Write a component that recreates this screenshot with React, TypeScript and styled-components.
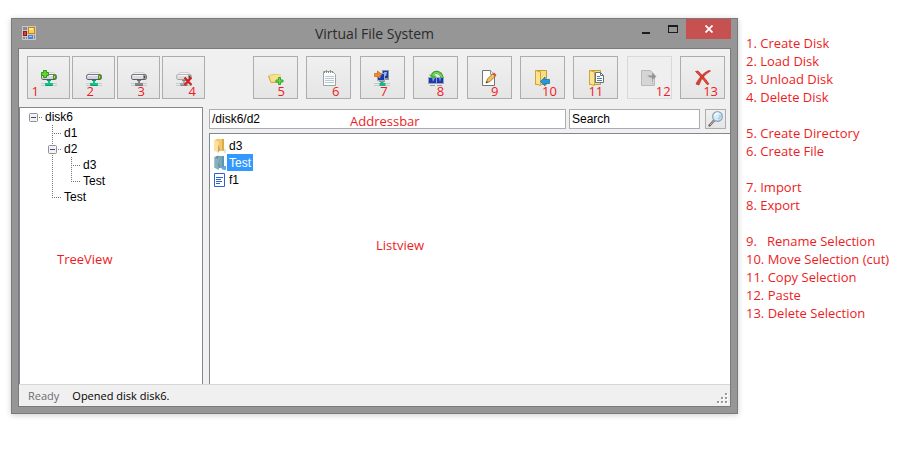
import React from "react";
import styled, { createGlobalStyle, css } from "styled-components";

const Global = createGlobalStyle`
  * { box-sizing: border-box; }
  body { margin: 0; background: #fff; }
  ul, ol { margin: 0; padding: 0; list-style: none; }
`;

const red = "#ed1c24";
const line = "#828790";
const uiFont = `"Liberation Sans", Arial, sans-serif`;
const segoe = `"Open Sans", "Noto Sans", sans-serif`;
const noteFont = `"Open Sans", "Noto Sans", sans-serif`;

const Page = styled.main`
  display: flex;
  align-items: flex-start;
  gap: 8px;
  padding: 18px 0 18px 11px;
`;

const Window = styled.section`
  flex: 1;
  min-width: 0;
  padding: 0 6px 6px;
  border: 1px solid #7a7a7a;
  background: #969696;
  box-shadow: 0 1px 6px rgba(0, 0, 0, 0.2);
`;

const TitleBar = styled.header`
  display: grid;
  grid-template-columns: 1fr auto 1fr;
  height: 29px;
`;

const AppIcon = styled.svg`
  width: 14px;
  height: 14px;
  margin: 7px 0 0 4px;
`;

const Title = styled.h1`
  margin: 0;
  font: 400 14px/30px ${segoe};
  color: #2b2b2b;
`;

const Controls = styled.div`
  display: flex;
  justify-content: flex-end;
  align-items: flex-start;
`;

const ControlButton = styled.button<{ $close?: boolean }>`
  display: flex;
  align-items: center;
  justify-content: center;
  width: ${(p) => (p.$close ? 45 : 27)}px;
  height: 20px;
  padding: 0;
  border: 0;
  background: ${(p) => (p.$close ? "#c75050" : "transparent")};
`;

const Client = styled.div`
  border: 1px solid #7a7a7a;
  background: #f0f0f0;
`;

const Toolbar = styled.div`
  display: flex;
  gap: 48px;
  padding: 7px 5px 8px 8px;
`;

const DiskGroup = styled.div`
  display: flex;
  gap: 2px;
`;

const FileGroup = styled.div`
  display: flex;
  flex: 1;
  justify-content: space-between;
`;

const ToolButton = styled.button<{ $wide?: boolean }>`
  position: relative;
  display: flex;
  align-items: center;
  justify-content: center;
  width: ${(p) => (p.$wide ? 45 : 43)}px;
  height: 43px;
  padding: 0;
  border: 1px solid #adadad;
  background: linear-gradient(#f0f0f0, #e5e5e5);
  &:disabled {
    border-color: #d9d9d9;
    background: #efefef;
  }
`;

const Icon = styled.svg`
  display: block;
  flex: none;
  width: 16px;
  height: 16px;
`;

const Tag = styled.span<{ $right: number }>`
  position: absolute;
  bottom: -2px;
  right: ${(p) => p.$right}px;
  font: 400 13px/18px ${noteFont};
  color: ${red};
`;

const Panes = styled.div`
  display: flex;
  gap: 6px;
  min-height: 277px;
`;

const noteBase = css`
  position: absolute;
  font: 400 13px/18px ${noteFont};
  color: ${red};
`;

const TreePane = styled.nav`
  position: relative;
  width: 184px;
  padding: 1px 0 0 4px;
  border: 1px solid ${line};
  border-bottom: 0;
  background: #fff;
`;

const TreeNote = styled.span`
  ${noteBase}
  left: 37px;
  top: 142px;
`;

const TreeRow = styled.li`
  display: flex;
  height: 16px;
  font: 400 12px/16px ${uiFont};
  color: #000;
`;

const Guide = styled.svg`
  display: block;
  flex: none;
  width: 19px;
  height: 16px;
`;

const NodeName = styled.span`
  padding-left: 2px;
`;

const Main = styled.div`
  display: flex;
  flex: 1;
  flex-direction: column;
  gap: 4px;
  min-width: 0;
  padding-top: 2px;
`;

const AddressRow = styled.div`
  display: flex;
  height: 20px;
  padding-right: 4px;
`;

const AddressField = styled.div`
  position: relative;
  display: flex;
  flex: 1;
  margin-right: 3px;
`;

const TextBox = styled.input`
  flex: 1;
  min-width: 0;
  height: 20px;
  padding: 0 2px 1px;
  border: 1px solid #abadb3;
  border-radius: 0;
  background: #fff;
  font: 400 12px/16px ${uiFont};
  color: #000;
`;

const SearchBox = styled(TextBox)`
  flex: none;
  width: 131px;
  margin-right: 5px;
`;

const SearchButton = styled.button`
  display: flex;
  align-items: center;
  justify-content: center;
  width: 21px;
  height: 20px;
  padding: 0;
  border: 1px solid #adadad;
  background: linear-gradient(#f0f0f0, #e5e5e5);
`;

const AddressNote = styled.span`
  ${noteBase}
  left: 141px;
  top: 3px;
`;

const ListPane = styled.div`
  position: relative;
  flex: 1;
  padding: 3px 0 0 4px;
  border: solid ${line};
  border-width: 1px 0 0 1px;
  background: #fff;
`;

const ListNote = styled.span`
  ${noteBase}
  left: 166px;
  top: 102px;
`;

const FileRow = styled.li`
  display: flex;
  align-items: center;
  height: 17px;
  font: 400 12px/16px ${uiFont};
  color: #000;
`;

const FileName = styled.span<{ $selected?: boolean }>`
  margin-left: -3px;
  padding: 1px 2px 0;
  background: ${(p) => (p.$selected ? "#3399ff" : "transparent")};
  color: ${(p) => (p.$selected ? "#fff" : "#000")};
`;

const StatusBar = styled.footer`
  display: flex;
  gap: 13px;
  height: 22px;
  padding: 0 2px 0 9px;
  border-top: 1px solid #d7d7d7;
  font: 400 11px/22px ${segoe};
  color: #000;
`;

const Ready = styled.span`
  color: #6d6d6d;
`;

const Grip = styled.svg`
  width: 11px;
  height: 11px;
  margin: 8px 0 0 auto;
`;

const Legend = styled.aside`
  display: flex;
  flex: none;
  flex-direction: column;
  gap: 18px;
  width: 168px;
  padding-top: 16px;
  font: 400 13px/18px ${noteFont};
  color: ${red};
`;

const LegendItem = styled.li`
  white-space: pre;
`;

type DriveMode = "add" | "load" | "unload" | "delete";

function DriveIcon({ mode }: { mode: DriveMode }) {
  const on = mode === "add" || mode === "load";
  const faded = mode === "delete";
  const foot = on ? "#10c489" : faded ? "#a8a8a8" : "#858585";
  const edge = faded ? "#b5b5b9" : "#77777d";
  return (
    <Icon viewBox="0 0 16 16" aria-hidden="true">
      <path d="M0 13.500h16M0 15.500h16" stroke="#c2cdd2" />
      <path d="M6 10h4v1H9v2h3v3H4v-3h3v-2H6z" fill={foot} />
      <path d="M6 10.500h4M5 15.500h6" stroke={on ? "#087b5b" : "#666"} opacity=".55" />
      <path d="M3.500 2.500h9l2 3h-13z" fill="#f1f1f1" stroke="#cfcfcf" />
      <rect x=".5" y="4.500" width="15" height="5" rx="1.500" fill={on ? "#d2d2e2" : "#dcdcdc"} stroke={edge} />
      <path d="M2 5.500h10" stroke="#f6f6fa" />
      <path d="M2 9.500h12" stroke={faded ? "#a0a0a0" : "#5b5b62"} />
      <rect x="12" y="5" width="3" height="4" fill={on ? "#419c19" : "#9b9b9b"} />
      <rect x="13" y="6" width="1" height="2" fill={on ? "#a7ee3b" : "#444"} />
      {mode === "add" && (
        <path d="M2.500.5h3v2h2v3h-2v2h-3v-2h-2v-3h2z" fill="#64d435" stroke="#269b13" />
      )}
      {mode === "delete" && (
        <path d="M8.500 7.500l7 7.500M15.500 7.500l-7 7.500" stroke="#d91e1e" strokeWidth="2.200" />
      )}
    </Icon>
  );
}

function NewFolderIcon() {
  return (
    <Icon viewBox="0 0 16 16" aria-hidden="true">
      <path d="M0 6l2-1.500L5 4h7.500v6.500l-2 2.500H3z" fill="#e6ca6c" />
      <path d="M2 5.500l10-1v5.500l-9 2z" fill="#f5e190" />
      <path d="M.5 6L3 12.500h7" stroke="#d2ae50" fill="none" />
      <path d="M10.500 7.500h2v2.500h2.500v2h-2.500v2.500h-2v-2.500h-2.500v-2h2.500z" fill="#68dc3c" stroke="#35a43a" />
    </Icon>
  );
}

function NotepadIcon() {
  return (
    <Icon viewBox="0 0 16 16" aria-hidden="true">
      <path d="M2.500 1.500h9l3 3v11h-12z" fill="#fdfdfd" stroke="#9ca3a3" />
      <path d="M4 6.500h9M4 8.500h9M4 10.500h9M4 12.500h9" stroke="#b5cbd7" />
      <path d="M3.500 1v2M5.500 0v3M7.500 1v2M9.500 0v3M11.500 1v2" stroke="#8b908f" />
    </Icon>
  );
}

function ImportIcon() {
  return (
    <Icon viewBox="0 0 16 16" aria-hidden="true">
      <path d="M0 13.500h16M0 15.500h16" stroke="#bdcbd0" />
      <path d="M6.500 12h3v1h2v3h-6v-3h1z" fill="#12b886" />
      <rect x="8.500" y=".5" width="6" height="8" fill="#1838ae" stroke="#8f959e" />
      <rect x="3.500" y="3.500" width="7" height="7" fill="#1838ae" stroke="#a9adb2" />
      <path d="M10 2h3l-1 4h-1zM5 5h2l-1 3H5z" fill="#92b3ff" />
      <path d="M5 11.500h6M11 9.500h4" stroke="#8d9298" />
      <path d="M.5 3.500h3V1L8 4.500 3.500 8V6.500h-3z" fill="#f18a29" stroke="#b86c25" strokeWidth=".7" />
    </Icon>
  );
}

function ExportIcon() {
  return (
    <Icon viewBox="0 0 16 16" aria-hidden="true">
      <rect x=".5" y="7.500" width="8" height="6" fill="#1b37b3" stroke="#9fa4b4" />
      <rect x="8.500" y="7.500" width="7" height="6" fill="#1b37b3" stroke="#9fa4b4" />
      <path d="M4 8h3l-2 4zM11 8h2l-1 4z" fill="#809cf4" />
      <path d="M2 15.500h5M9 15.500h5" stroke="#9b9b9b" />
      <path d="M14 8C13 1 5 1 4.500 5.500" fill="none" stroke="#3b9e35" strokeWidth="3.200" />
      <path d="M1 4.500L4.500 9 9 6z" fill="#43b93b" />
      <path d="M13.800 7.500C12.500 2 6 1.500 5 5.500" fill="none" stroke="#72d65d" strokeWidth="1.800" />
    </Icon>
  );
}

function RenameIcon() {
  return (
    <Icon viewBox="0 0 16 16" aria-hidden="true">
      <path d="M1.500.5h8l4 4v11h-12z" fill="#fff" stroke="#747474" />
      <path d="M9.500.5v4h4" fill="#eee" stroke="#929292" />
      <path d="M5 13l1.500-4L12 3.500l2.500 2.500L9 11.500z" fill="#f3c653" stroke="#856023" strokeWidth=".8" />
      <path d="M11.500 4l1.500-1.500L15.500 5 14 6.500z" fill="#d84c4c" />
      <path d="M5 13l.8-2 1.200 1.200z" fill="#333" />
    </Icon>
  );
}

function FolderBase() {
  return (
    <>
      <path d="M1.500.5h11v14h-11z" fill="#ecc452" stroke="#c99b35" />
      <path d="M7 1h5v13H7z" fill="#f7de83" />
      <path d="M1.500.5L6.500 2v13.500l-5-1.500z" fill="#fbe58e" stroke="#cfa43c" />
    </>
  );
}

function MoveIcon() {
  return (
    <Icon viewBox="0 0 16 16" aria-hidden="true">
      <FolderBase />
      <path d="M6.500 11.500L11 7v2.500h4.500v4H11V16z" fill="#2399df" stroke="#1770ad" strokeWidth=".8" />
    </Icon>
  );
}

function CopyIcon() {
  return (
    <Icon viewBox="0 0 16 16" aria-hidden="true">
      <FolderBase />
      <path d="M7.500 2.500h5l3 3v7h-8z" fill="#fff" stroke="#65727e" />
      <path d="M12.500 2.500v3h3" fill="none" stroke="#65727e" />
      <path d="M9 6.500h3M9 8.500h5M9 10.500h5" stroke="#4b7fb4" />
    </Icon>
  );
}

function PasteIcon() {
  return (
    <Icon viewBox="0 0 16 16" aria-hidden="true">
      <path d="M.5.5h9l4 4v11H.5z" fill="#d5d5d5" stroke="#b9b9b9" />
      <path d="M6 5.500h5V3l4.500 3.500L11 10V7.500H9z" fill="#959595" />
      <path d="M11.500 10v4" stroke="#aaa" strokeDasharray="2 1" />
    </Icon>
  );
}

function DeleteIcon() {
  return (
    <Icon viewBox="0 0 16 16" aria-hidden="true">
      <path d="M.5 1.500L3 1c3 3 7 7 11 13l-2 .5C8 9 5 6 .5 1.500z" fill="#e04a35" stroke="#b92b20" strokeWidth=".7" />
      <path d="M15.500 1C10 4 6 9 4 15l-3-1C4 8 8 3 14 .5z" fill="#df3f2e" stroke="#b92b20" strokeWidth=".7" />
    </Icon>
  );
}

function SearchIcon() {
  return (
    <Icon viewBox="0 0 16 16" aria-hidden="true">
      <path d="M6.500 9L1.500 14.500" stroke="#75676a" strokeWidth="2.400" strokeLinecap="round" />
      <path d="M6 9.500L2 14" stroke="#c6b6b3" />
      <circle cx="9.500" cy="5.500" r="4.800" fill="#d4edfa" stroke="#91a9bd" strokeWidth="1.400" />
      <path d="M7 5c0-2 1.500-3 3.500-3" stroke="#fff" strokeWidth="1.500" fill="none" />
      <path d="M12 4c.5 2-.5 3.500-2 4" stroke="#9ccdec" strokeWidth="1.500" fill="none" />
    </Icon>
  );
}

function FolderIcon({ selected }: { selected?: boolean }) {
  return (
    <Icon viewBox="0 0 16 16" aria-hidden="true">
      <path d="M.5 2l4-1.500v11L.5 13z" fill={selected ? "#568b9e" : "#f2c85c"} />
      <path d="M4 1h6v12H5z" fill={selected ? "#79a8b5" : "#f3c773"} />
      <path d="M8 1h2v11l-2 1z" fill={selected ? "#6493b3" : "#d7ad45"} />
      <path d="M1 2l3.500 2v11L1 13z" fill={selected ? "#84b2bb" : "#ffe29a"} />
      <path d="M4.500 6l1 6-1 3z" fill={selected ? "#3f7991" : "#9a642b"} />
      <path d="M10 11h2v4h-2z" fill={selected ? "#62a9e5" : "#e9e4d7"} />
      {selected && <path d="M7 13l5-2v3l-3 1z" fill="#67abe2" />}
    </Icon>
  );
}

function FileIcon() {
  return (
    <Icon viewBox="0 0 16 16" aria-hidden="true">
      <path d="M.5 1.500h10v13H.5z" fill="#fff" stroke="#2c64cf" />
      <path d="M2 5.500h7M2 7.500h5M2 9.500h6M2 11.500h4" stroke="#2c64cf" />
    </Icon>
  );
}

const diskTools: { tag: string; label: string; right: number; mode: DriveMode }[] = [
  { tag: "1", label: "Create disk", right: 30, mode: "add" },
  { tag: "2", label: "Load disk", right: 20, mode: "load" },
  { tag: "3", label: "Unload disk", right: 14, mode: "unload" },
  { tag: "4", label: "Delete disk", right: 8, mode: "delete" },
];

const fileTools = [
  { tag: "5", label: "Create directory", right: 12, icon: <NewFolderIcon /> },
  { tag: "6", label: "Create file", right: 11, icon: <NotepadIcon /> },
  { tag: "7", label: "Import", right: 16, icon: <ImportIcon /> },
  { tag: "8", label: "Export", right: 13, icon: <ExportIcon /> },
  { tag: "9", label: "Rename selection", right: 12, icon: <RenameIcon /> },
  { tag: "10", label: "Move selection", right: 7, icon: <MoveIcon /> },
  { tag: "11", label: "Copy selection", right: 14, icon: <CopyIcon /> },
  { tag: "12", label: "Paste", right: 0, icon: <PasteIcon />, disabled: true },
  { tag: "13", label: "Delete selection", right: 6, icon: <DeleteIcon /> },
];

type Cell = "blank" | "root" | "open" | "down" | "tee" | "end";

const tree: { name: string; cells: Cell[] }[] = [
  { name: "disk6", cells: ["root"] },
  { name: "d1", cells: ["blank", "tee"] },
  { name: "d2", cells: ["blank", "open"] },
  { name: "d3", cells: ["blank", "down", "tee"] },
  { name: "Test", cells: ["blank", "down", "end"] },
  { name: "Test", cells: ["blank", "end"] },
];

function TreeGuide({ cell }: { cell: Cell }) {
  const box = cell === "root" || cell === "open";
  const vertical = cell === "down" || cell === "tee" || cell === "open";
  return (
    <Guide viewBox="0 0 19 16" aria-hidden="true">
      <g stroke="#777" strokeDasharray="1 1" fill="none">
        {vertical && <path d="M9.500 0v16" />}
        {cell === "end" && <path d="M9.500 0v8" />}
        {cell !== "blank" && cell !== "down" && <path d="M9 8.500h9" />}
      </g>
      {box && (
        <>
          <rect x="5.500" y="4.500" width="8" height="8" rx="1" fill="#f2f2f2" stroke="#919191" />
          <path d="M7 8.500h5" stroke="#33479b" />
        </>
      )}
    </Guide>
  );
}

const legend = [
  ["1. Create Disk", "2. Load Disk", "3. Unload Disk", "4. Delete Disk"],
  ["5. Create Directory", "6. Create File"],
  ["7. Import", "8. Export"],
  ["9.   Rename Selection", "10. Move Selection (cut)", "11. Copy Selection", "12. Paste", "13. Delete Selection"],
];

export default function App() {
  return (
    <>
      <Global />
      <Page>
        <Window>
          <TitleBar>
            <AppIcon viewBox="0 0 14 14" aria-hidden="true">
              <path d="M0 0h14v14H0z" fill="#c8c8c8" />
              <path d="M1 1h4v3H1zM1 11h2v2H1zM4 11h1v2H4zM12 9h1v4h-1z" fill="#8b8b8b" />
              <rect x="6.500" y="1.500" width="6" height="6" fill="#ffd04b" stroke="#c9840d" />
              <path d="M7 2h4v2H7z" fill="#ffeaa0" />
              <rect x="1.500" y="5.500" width="3" height="4" fill="#d94337" stroke="#951a16" />
              <rect x="6" y="9" width="5" height="4" fill="#4c82dc" />
              <path d="M7 10h3v1H7z" fill="#a4c4ff" />
            </AppIcon>
            <Title>Virtual File System</Title>
            <Controls>
              <ControlButton aria-label="Minimize">
                <svg width="9" height="9" viewBox="0 0 9 9"><path d="M1 8h8" stroke="#1c1c1c" strokeWidth="2" /></svg>
              </ControlButton>
              <ControlButton aria-label="Maximize">
                <svg width="10" height="8" viewBox="0 0 10 8"><path d="M.5 0v8M9.500 0v8M0 7.500h10" fill="none" stroke="#1c1c1c" /><path d="M0 0h10v2H0z" fill="#1c1c1c" /></svg>
              </ControlButton>
              <ControlButton $close aria-label="Close">
                <svg width="8" height="8" viewBox="0 0 8 8"><path d="M.5.5l7 7M7.500.5l-7 7" stroke="#fff" strokeWidth="1.800" /></svg>
              </ControlButton>
            </Controls>
          </TitleBar>
          <Client>
            <Toolbar>
              <DiskGroup>
                {diskTools.map((t) => (
                  <ToolButton key={t.tag} aria-label={t.label}>
                    <DriveIcon mode={t.mode} />
                    <Tag $right={t.right}>{t.tag}</Tag>
                  </ToolButton>
                ))}
              </DiskGroup>
              <FileGroup>
                {fileTools.map((t) => (
                  <ToolButton key={t.tag} $wide aria-label={t.label} disabled={t.disabled}>
                    {t.icon}
                    <Tag $right={t.right}>{t.tag}</Tag>
                  </ToolButton>
                ))}
              </FileGroup>
            </Toolbar>
            <Panes>
              <TreePane aria-label="Disk tree">
                <ul>
                  {tree.map((node, i) => (
                    <TreeRow key={i}>
                      {node.cells.map((cell, j) => (
                        <TreeGuide key={j} cell={cell} />
                      ))}
                      <NodeName>{node.name}</NodeName>
                    </TreeRow>
                  ))}
                </ul>
                <TreeNote>TreeView</TreeNote>
              </TreePane>
              <Main>
                <AddressRow>
                  <AddressField>
                    <TextBox aria-label="Address" defaultValue="/disk6/d2" />
                    <AddressNote>Addressbar</AddressNote>
                  </AddressField>
                  <SearchBox aria-label="Search" defaultValue="Search" />
                  <SearchButton aria-label="Run search">
                    <SearchIcon />
                  </SearchButton>
                </AddressRow>
                <ListPane>
                  <ul>
                    <FileRow>
                      <FolderIcon />
                      <FileName>d3</FileName>
                    </FileRow>
                    <FileRow>
                      <FolderIcon selected />
                      <FileName $selected>Test</FileName>
                    </FileRow>
                    <FileRow>
                      <FileIcon />
                      <FileName>f1</FileName>
                    </FileRow>
                  </ul>
                  <ListNote>Listview</ListNote>
                </ListPane>
              </Main>
            </Panes>
            <StatusBar>
              <Ready>Ready</Ready>
              <span>Opened disk disk6.</span>
              <Grip viewBox="0 0 11 11" aria-hidden="true">
                <path d="M9 1h2v2H9zM5 5h2v2H5zM9 5h2v2H9zM1 9h2v2H1zM5 9h2v2H5zM9 9h2v2H9z" fill="#fff" />
                <path d="M8 0h2v2H8zM4 4h2v2H4zM8 4h2v2H8zM0 8h2v2H0zM4 8h2v2H4zM8 8h2v2H8z" fill="#9a9a9a" />
              </Grip>
            </StatusBar>
          </Client>
        </Window>
        <Legend>
          {legend.map((group, i) => (
            <ol key={i}>
              {group.map((text) => (
                <LegendItem key={text}>{text}</LegendItem>
              ))}
            </ol>
          ))}
        </Legend>
      </Page>
    </>
  );
}
